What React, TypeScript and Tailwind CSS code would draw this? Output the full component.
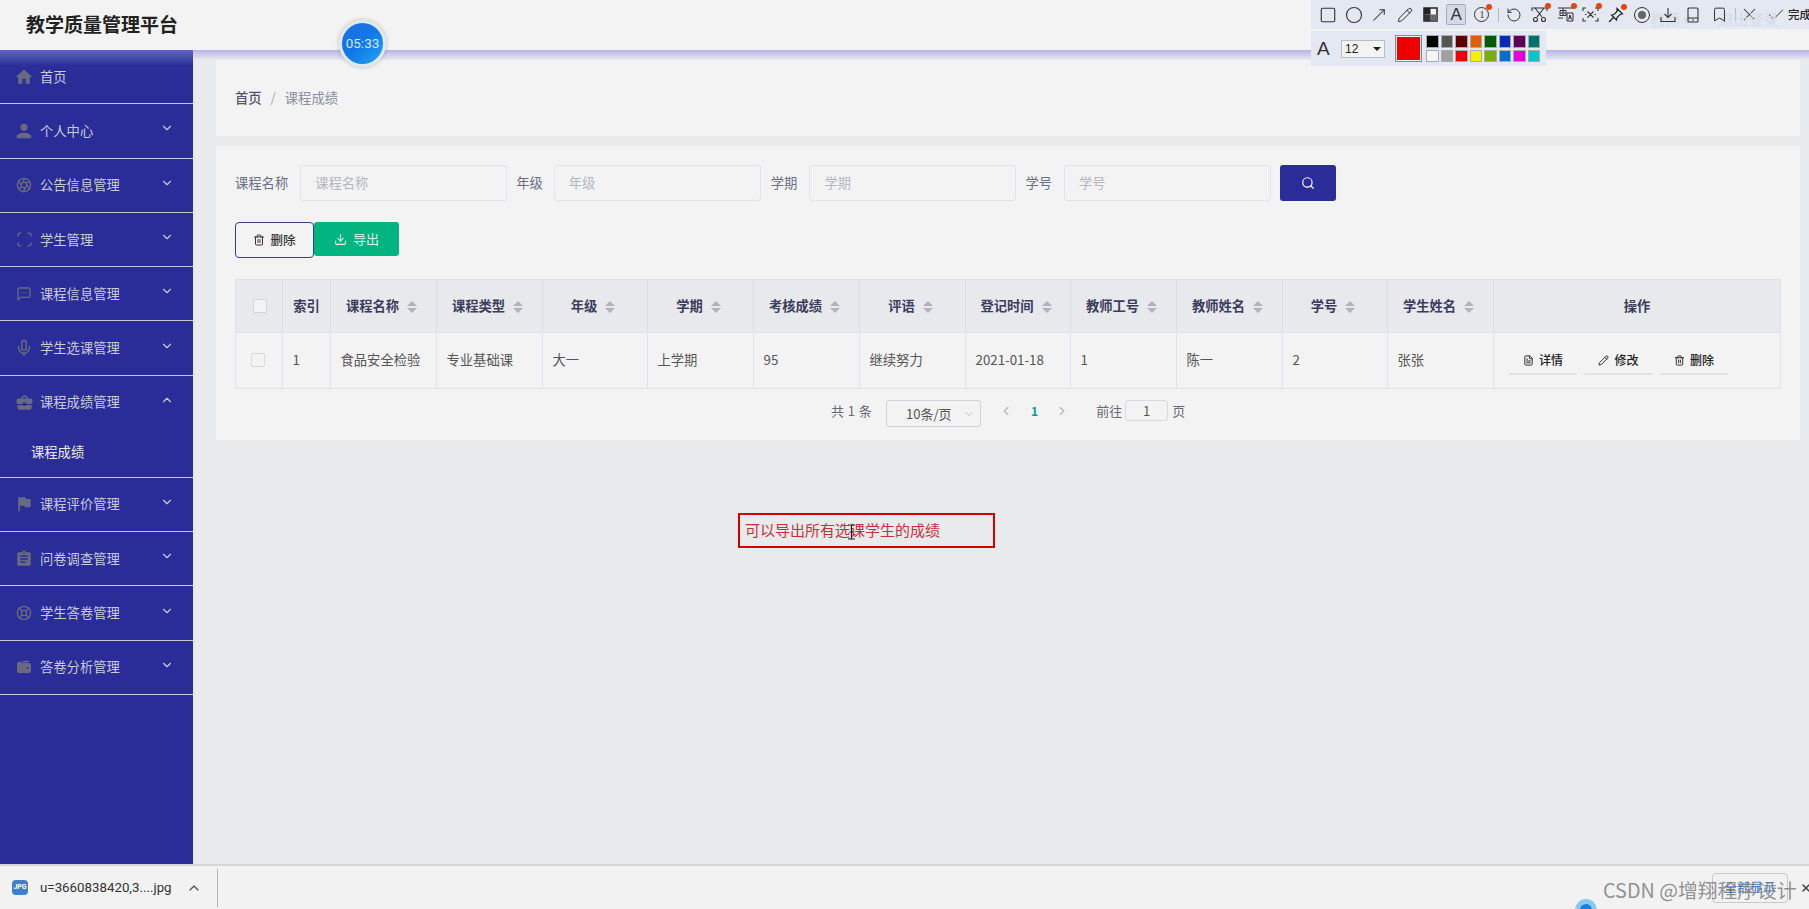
import { ChevronDown, ChevronUp, ChevronLeft, ChevronRight, Search, Trash2, Download, FileText, Pencil, Square, Circle, MoveUpRight, RotateCcw, X, Check, Bookmark } from 'lucide-react';
import { MdHome, MdPerson, MdBusinessCenter, MdFlag, MdAssignment } from 'react-icons/md';
import { LuAperture, LuScan, LuMessageSquareMore, LuMic, LuLifeBuoy } from 'react-icons/lu';
import { IoWallet } from 'react-icons/io5';
import type { ReactNode } from 'react';

const menu: { label: string; icon: ReactNode; arrow?: boolean; children?: string[] }[] = [
    { label: '首页', icon: <MdHome className="w-[20px] h-[20px] shrink-0" /> },
    { label: '个人中心', icon: <MdPerson className="w-[22px] h-[22px] shrink-0" />, arrow: true },
    { label: '公告信息管理', icon: <LuAperture className="w-[16px] h-[16px] shrink-0" />, arrow: true },
    { label: '学生管理', icon: <LuScan className="w-[17px] h-[17px] shrink-0" />, arrow: true },
    { label: '课程信息管理', icon: <LuMessageSquareMore className="w-[16px] h-[16px] shrink-0" />, arrow: true },
    { label: '学生选课管理', icon: <LuMic className="w-[18px] h-[18px] shrink-0" />, arrow: true },
    { label: '课程成绩管理', icon: <MdBusinessCenter className="w-[19px] h-[19px] shrink-0" />, children: ['课程成绩'] },
    { label: '课程评价管理', icon: <MdFlag className="w-[20px] h-[20px] shrink-0" />, arrow: true },
    { label: '问卷调查管理', icon: <MdAssignment className="w-[18px] h-[18px] shrink-0" />, arrow: true },
    { label: '学生答卷管理', icon: <LuLifeBuoy className="w-[16px] h-[16px] shrink-0" />, arrow: true },
    { label: '答卷分析管理', icon: <IoWallet className="w-[16px] h-[16px] shrink-0" />, arrow: true },
];

const columns = [
    { label: '索引', width: 'w-[48px]', sort: false },
    { label: '课程名称', width: 'w-[106px]', sort: true },
    { label: '课程类型', width: 'w-[106px]', sort: true },
    { label: '年级', width: 'w-[105px]', sort: true },
    { label: '学期', width: 'w-[106px]', sort: true },
    { label: '考核成绩', width: 'w-[106px]', sort: true },
    { label: '评语', width: 'w-[106px]', sort: true },
    { label: '登记时间', width: 'w-[105px]', sort: true },
    { label: '教师工号', width: 'w-[106px]', sort: true },
    { label: '教师姓名', width: 'w-[106px]', sort: true },
    { label: '学号', width: 'w-[105px]', sort: true },
    { label: '学生姓名', width: 'w-[106px]', sort: true },
];

const row = ['1', '食品安全检验', '专业基础课', '大一', '上学期', '95', '继续努力', '2021-01-18', '1', '陈一', '2', '张张'];
const swatches = ['#000000', '#555555', '#5c0000', '#e06000', '#005c00', '#0a28b4', '#5c005c', '#007070', '#f5f5f5', '#a0a0a0', '#ee0000', '#f5f000', '#78b000', '#0070d0', '#e000e0', '#00c8c8'];

function SortArrows() {
    return (
        <span className="inline-flex flex-col gap-[2px] ml-[8px] mr-[4px] align-middle">
            <span className="w-0 h-0 border-x-[5px] border-x-transparent border-b-[5px] border-b-[#b0b3bd]" />
            <span className="w-0 h-0 border-x-[5px] border-x-transparent border-t-[5px] border-t-[#b0b3bd]" />
        </span>
    );
}

function Dot() {
    return <span className="absolute -top-[3px] -right-[3px] w-[6px] h-[6px] rounded-full bg-[#e2470f]" />;
}

function Slot({ children, dot }: { children: ReactNode; dot?: boolean }) {
    return (
        <span className="w-[25.7px] shrink-0 flex justify-center">
            <span className="relative flex">
                {children}
                {dot && <Dot />}
            </span>
        </span>
    );
}

function Field({ label, gap }: { label: string; gap: string }) {
    return (
        <div className={`flex items-center ${gap}`}>
            <span className="text-[13.3px] text-[#6a6e85] whitespace-nowrap">{label}</span>
            <div className="w-[207px] h-[36px] border border-[#e2e3ee] rounded-[3px] pl-[14px] flex items-center text-[13.3px] text-[#b4b6c0]">{label}</div>
        </div>
    );
}

function ActionButton({ icon, label }: { icon: ReactNode; label: string }) {
    return (
        <div className="w-[68px] h-[28px] border-b-2 border-[#e2e2e2] flex items-center justify-center gap-[5px] text-[12px] font-medium text-[#222]">
            {icon}
            {label}
        </div>
    );
}

export default function App() {
    return (
        <div className="relative w-[1809px] h-[909px] overflow-hidden flex flex-col bg-[#e9eaec] font-['Noto_Sans_CJK_SC','Noto_Sans',sans-serif]">
            {/* Header */}
            <div className="h-[50px] shrink-0 bg-[#f3f3f3] pl-[26px] flex items-center pb-[2px]">
                <h1 className="text-[19px] font-bold text-[#222]">教学质量管理平台</h1>
            </div>

            <div className="flex-1 flex min-h-0">
                {/* Sidebar */}
                <aside className="w-[193px] shrink-0 bg-[#2a2c97] text-[13.3px] text-[#c9cbdc]">
                    {menu.map((item, i) => (
                        <div key={item.label} className={`border-b border-[#c5c6dc] ${i === 0 ? 'bg-gradient-to-b from-[#6465bd] via-[#2a2c97] via-30% to-[#2a2c97]' : ''}`}>
                            <div className="h-[53.3px] flex items-center pl-[17px] pr-[19px]">
                                <span className="w-[14px] flex justify-center text-[#686b80]">{item.icon}</span>
                                <span className="ml-[9px] flex-1">{item.label}</span>
                                {item.arrow && <ChevronDown className="w-[14px] h-[14px] -mt-[5px]" strokeWidth={2} />}
                                {item.children && <ChevronUp className="w-[14px] h-[14px] -mt-[5px]" strokeWidth={2} />}
                            </div>
                            {item.children?.map((c) => (
                                <div key={c} className="h-[47.7px] pl-[31px] pb-[1px] flex items-center text-white/90">{c}</div>
                            ))}
                        </div>
                    ))}
                </aside>

                {/* Main */}
                <main className="flex-1 min-w-0">
                    <div className="h-[10px] bg-gradient-to-b from-[#b5b5ea] to-[#e9eaec]" />
                    <div className="ml-[23px] mr-[9px]">
                        <div className="h-[76px] bg-[#f3f3f3] px-[19px] flex items-center text-[13.3px] pb-[1px]">
                            <span className="text-[#50546a] font-medium">首页</span>
                            <span className="mx-[9px] text-[#a4a7b4]">/</span>
                            <span className="text-[#8b8e9e]">课程成绩</span>
                        </div>

                        <div className="h-[294px] mt-[10px] bg-[#f3f3f3] px-[19px] pt-[19px]">
                            {/* Filter */}
                            <div className="flex items-center">
                                <Field label="课程名称" gap="gap-[12px]" />
                                <div className="ml-[9px]"><Field label="年级" gap="gap-[11px]" /></div>
                                <div className="ml-[10px]"><Field label="学期" gap="gap-[12px]" /></div>
                                <div className="ml-[9px]"><Field label="学号" gap="gap-[12px]" /></div>
                                <button className="ml-[9px] w-[56px] h-[36px] bg-[#2a2c97] rounded-[3px] flex items-center justify-center text-white">
                                    <Search className="w-[14px] h-[14px]" />
                                </button>
                            </div>

                            {/* Actions */}
                            <div className="flex items-start mt-[21px] text-[13px]">
                                <button className="w-[79px] h-[36px] border border-[#3a3c8c] rounded-[4px] flex items-center justify-center gap-[5px] text-[12.5px] font-medium text-[#333]">
                                    <Trash2 className="w-[12px] h-[12px]" />
                                    删除
                                </button>
                                <button className="w-[85px] h-[34px] bg-[#02b580] rounded-[3px] flex items-center justify-center gap-[6px] text-[#d8f5ea]">
                                    <Download className="w-[13px] h-[13px]" />
                                    导出
                                </button>
                            </div>

                            {/* Table */}
                            <table className="mt-[21px] w-[1546px] table-fixed border-collapse text-[13.3px]">
                                <colgroup>
                                    <col className="w-[47px]" />
                                    {columns.map((c) => <col key={c.label} className={c.width} />)}
                                    <col />
                                </colgroup>
                                <thead>
                                    <tr className="h-[53px] bg-[#e8e9ec] text-[#3b3d5e]">
                                        <th className="border border-[#dfe1ea]">
                                            <span className="block w-[14px] h-[14px] ml-[17px] border border-[#d3d4dc] rounded-[2px] bg-[#f3f3f3]" />
                                        </th>
                                        {columns.map((c) => (
                                            <th key={c.label} className="border border-[#dfe1ea] font-semibold whitespace-nowrap">
                                                {c.label}
                                                {c.sort && <SortArrows />}
                                            </th>
                                        ))}
                                        <th className="border border-[#dfe1ea] font-semibold">操作</th>
                                    </tr>
                                </thead>
                                <tbody>
                                    <tr className="h-[56px] text-[#555]">
                                        <td className="border border-[#dfe1ea]">
                                            <span className="block w-[14px] h-[14px] ml-[15px] -mt-[1px] border border-[#d8d9df] rounded-[2px]" />
                                        </td>
                                        {row.map((v, i) => (
                                            <td key={i} className="border border-[#dfe1ea] pl-[9.5px] pb-[2px] whitespace-nowrap">{v}</td>
                                        ))}
                                        <td className="border border-[#dfe1ea] pl-[15px]">
                                            <div className="flex gap-[7.5px] mt-[1px]">
                                                <ActionButton icon={<FileText className="w-[11px] h-[11px]" />} label="详情" />
                                                <ActionButton icon={<Pencil className="w-[11px] h-[11px]" />} label="修改" />
                                                <ActionButton icon={<Trash2 className="w-[11px] h-[11px]" />} label="删除" />
                                            </div>
                                        </td>
                                    </tr>
                                </tbody>
                            </table>

                            {/* Pagination */}
                            <div className="mt-[11px] pl-[596px] flex items-start text-[13px] text-[#666a78]">
                                <span className="mt-[1px] tracking-[0.4px]">共 1 条</span>
                                <div className="ml-[14px] w-[95px] h-[27px] border border-[#cfd1d8] rounded-[3px] flex items-center pl-[19px] pr-[3px] text-[#555]">
                                    <span className="flex-1">10条/页</span>
                                    <ChevronDown className="w-[12px] h-[12px] text-[#c0c2c8] mr-[2px]" />
                                </div>
                                <ChevronLeft className="ml-[18px] mt-[4px] w-[14px] h-[14px] text-[#b4b6bf]" />
                                <span className="ml-[18px] mt-[2px] font-bold text-[#02a57c] text-[12px]">1</span>
                                <ChevronRight className="ml-[17px] mt-[4px] w-[14px] h-[14px] text-[#b4b6bf]" />
                                <span className="ml-[27px] mt-[1px]">前往</span>
                                <div className="ml-[3px] w-[43px] h-[21px] border border-[#d8d9e0] rounded-[3px] flex items-center justify-center text-[#555]">1</div>
                                <span className="ml-[4px] mt-[1px]">页</span>
                            </div>
                        </div>
                    </div>
                </main>
            </div>

            {/* Download bar */}
            <div className="h-[45px] shrink-0 bg-[#f2f2f2] border-t-2 border-[#d4d5d8] flex items-center font-['Roboto','Noto_Sans',sans-serif] text-[13.3px] text-[#333]">
                <span className="ml-[12px] w-[16px] h-[15px] rounded-[4px] bg-[#3f7fd0] text-white text-[7px] font-bold flex items-center justify-center">JPG</span>
                <span className="ml-[12px]">u=3660838420,3....jpg</span>
                <ChevronUp className="ml-[14px] w-[16px] h-[16px] text-[#555]" />
                <span className="ml-[15px] w-px h-[38px] bg-[#b4b4b4]" />
                <div className="ml-auto mr-[21px] w-[76px] h-[30px] border border-[#c8c8c8] rounded-[4px] flex items-center justify-center text-[13px] text-[#2a6fd0]">全部显示</div>
            </div>
            <X className="absolute left-[1800px] top-[882px] w-[12px] h-[12px] text-[#444]" strokeWidth={3} />
            <span className="absolute left-[1575px] top-[899px] w-[22px] h-[22px] rounded-full bg-[#8cc8f5] flex items-center justify-center">
                <span className="w-[12px] h-[12px] rounded-full bg-[#1a7fe0]" />
            </span>

            {/* Watermark */}
            <span className="absolute left-[1603px] top-[875px] text-[19.8px] text-[#777]/80 whitespace-nowrap">CSDN @增翔程序设计</span>

            {/* Recording timer */}
            <div className="absolute left-[339px] top-[20px] w-[47px] h-[47px] rounded-full border-[3px] border-[#dfe9ee] bg-gradient-to-br from-[#1a6fe8] via-[#1178e6] to-[#26a8ee] flex items-center justify-center text-[13.5px] text-[#d4e8f8] shadow-[0_0_4px_rgba(0,0,0,0.25)] font-['Roboto',sans-serif]">
                05:33
            </div>

            {/* Screenshot toolbar */}
            <div className="absolute left-[1311px] top-0 w-[498px] h-[29px] bg-[#e3e8f2] flex items-center pl-[4px] text-[#333]">
                <div className="absolute left-[339px] top-[9px] flex gap-[27px] text-[15px] leading-[20px] text-[#d6dbe6] whitespace-nowrap">
                    <span>教师 ▾</span>
                    <span>退出登录</span>
                </div>
                <Slot><Square className="w-[18px] h-[18px]" strokeWidth={1.5} /></Slot>
                <Slot><Circle className="w-[18px] h-[18px]" strokeWidth={1.5} /></Slot>
                <Slot><MoveUpRight className="w-[18px] h-[18px]" strokeWidth={1.4} /></Slot>
                <Slot><Pencil className="w-[16px] h-[16px]" strokeWidth={1.5} /></Slot>
                <Slot>
                    <svg className="w-[15px] h-[15px]" viewBox="0 0 15 15">
                        <rect x="1" y="1" width="13" height="13" fill="#f5f5f5" stroke="#222" strokeWidth="1.5" />
                        <rect x="1" y="1" width="6.5" height="6.5" fill="#222" />
                        <rect x="7.5" y="7.5" width="6.5" height="6.5" fill="#666" />
                        <rect x="1" y="7.5" width="6.5" height="6.5" fill="#333" />
                    </svg>
                </Slot>
                <Slot>
                    <span className="w-[20px] h-[21px] border border-[#aab] rounded-[2px] bg-[#d4d9e4] flex items-center justify-center text-[17px] font-['Liberation_Sans',sans-serif] leading-none">A</span>
                </Slot>
                <Slot dot>
                    <span className="w-[15px] h-[15px] rounded-full border-[1.5px] border-[#333] flex items-center justify-center text-[10px] leading-none font-['Liberation_Serif',serif]">1</span>
                </Slot>
                <span className="ml-[3px] mr-[2px] w-px h-[14px] shrink-0 bg-[#b8bcc8]" />
                <Slot><RotateCcw className="w-[16px] h-[16px]" strokeWidth={1.5} /></Slot>
                <Slot dot>
                    <svg className="w-[17px] h-[17px]" viewBox="0 0 17 17" fill="none" stroke="#333" strokeWidth="1.1">
                        <path d="M1 5V2h15v3" />
                        <path d="M4 2l7 9M13 2l-7 9" />
                        <circle cx="4.5" cy="13.5" r="2" />
                        <circle cx="12.5" cy="13.5" r="2" />
                    </svg>
                </Slot>
                <Slot dot>
                    <svg className="w-[17px] h-[17px]" viewBox="0 0 17 17" fill="none" stroke="#333" strokeWidth="1">
                        <path d="M1 2h15M3 4.5h6v5H3zM6 2v7.5M3 7h6M1 12h5" />
                        <path d="M10 7h6v8h-6z" />
                        <path d="M11.5 13.5l1.5-4.5 1.5 4.5M12 12h2" />
                    </svg>
                </Slot>
                <Slot dot>
                    <svg className="w-[17px] h-[17px]" viewBox="0 0 17 17" fill="none" stroke="#333" strokeWidth="1.1">
                        <path d="M1 5V2h3M13 2h3v3M1 12v3h3M13 15h3v-3" />
                        <path d="M5.5 5.5l6 6M11.5 5.5l-6 6M3 8.5h1.5M12.5 8.5H14" />
                    </svg>
                </Slot>
                <Slot dot>
                    <svg className="w-[16px] h-[16px]" viewBox="0 0 16 16" fill="none" stroke="#222" strokeWidth="1.2">
                        <path d="M9 1.5l5.5 5.5-2.5.5-3 3-.5 2.5L3.5 8l2.5-.5 3-3z" fill="#e3e8f2" />
                        <path d="M5.5 10.5L1 15" />
                    </svg>
                </Slot>
                <Slot>
                    <span className="w-[16px] h-[16px] rounded-full border-[1.5px] border-[#333] flex items-center justify-center">
                        <span className="w-[8px] h-[8px] rounded-full bg-[#666]" />
                    </span>
                </Slot>
                <Slot>
                    <svg className="w-[16px] h-[16px]" viewBox="0 0 16 16" fill="none" stroke="#333" strokeWidth="1.1">
                        <path d="M8 1v9M4.5 7L8 10.5 11.5 7M1 10v4.5h14V10" />
                    </svg>
                </Slot>
                <Slot>
                    <svg className="w-[14px] h-[16px]" viewBox="0 0 14 16" fill="none" stroke="#333" strokeWidth="1.1">
                        <rect x="2" y="1" width="10" height="14" rx="1" />
                        <path d="M2 11h10M6 13h2" />
                    </svg>
                </Slot>
                <Slot><Bookmark className="w-[17px] h-[17px]" strokeWidth={1.4} /></Slot>
                <span className="ml-[3px] mr-[3px] w-px h-[14px] shrink-0 bg-[#b8bcc8]" />
                <X className="w-[21px] h-[21px] shrink-0" strokeWidth={1.2} />
                <Check className="ml-[6px] w-[20px] h-[20px] shrink-0" strokeWidth={1.2} />
                <span className="ml-[2px] text-[11.5px] font-medium text-[#222] whitespace-nowrap">完成</span>
            </div>
            <div className="absolute left-[1311px] top-[31px] w-[235px] h-[35px] bg-[#e3e8f2] flex items-center pl-[6px]">
                <span className="w-[18px] text-[19px] text-[#333] font-['Liberation_Sans',sans-serif] leading-none">A</span>
                <div className="ml-[6px] w-[44px] h-[18px] border border-[#b8bcc8] bg-[#f3f3f3] flex items-center justify-between px-[3px] text-[12px] text-[#222] font-['Liberation_Sans',sans-serif]">
                    12
                    <span className="w-0 h-0 border-x-[4px] border-x-transparent border-t-[4px] border-t-[#222]" />
                </div>
                <div className="ml-[10px] w-[27px] h-[27px] border border-[#888] p-[1px] bg-[#f3f3f3]"><div className="w-full h-full bg-[#ee0000]" /></div>
                <div className="ml-[4px] grid grid-cols-8 gap-[2px]">
                    {swatches.map((s) => (
                        <span key={s} className="w-[12.5px] h-[12.5px] border border-[#aaa]" style={{ backgroundColor: s }} />
                    ))}
                </div>
            </div>

            {/* Annotation */}
            <div className="absolute left-[738px] top-[513px] w-[257px] h-[35px] border-2 border-[#d30000] pl-[5px] flex items-center text-[15px] text-[#c8303a] whitespace-nowrap">
                可以导出所有选课学生的成绩
            </div>
            <svg className="absolute left-[847px] top-[524px] w-[9px] h-[16px]" viewBox="0 0 9 16" fill="none" stroke="#222" strokeWidth="1.2">
                <path d="M1 1h7M4.5 1v14M1 15h7M2.5 8h4" />
            </svg>
        </div>
    );
}
